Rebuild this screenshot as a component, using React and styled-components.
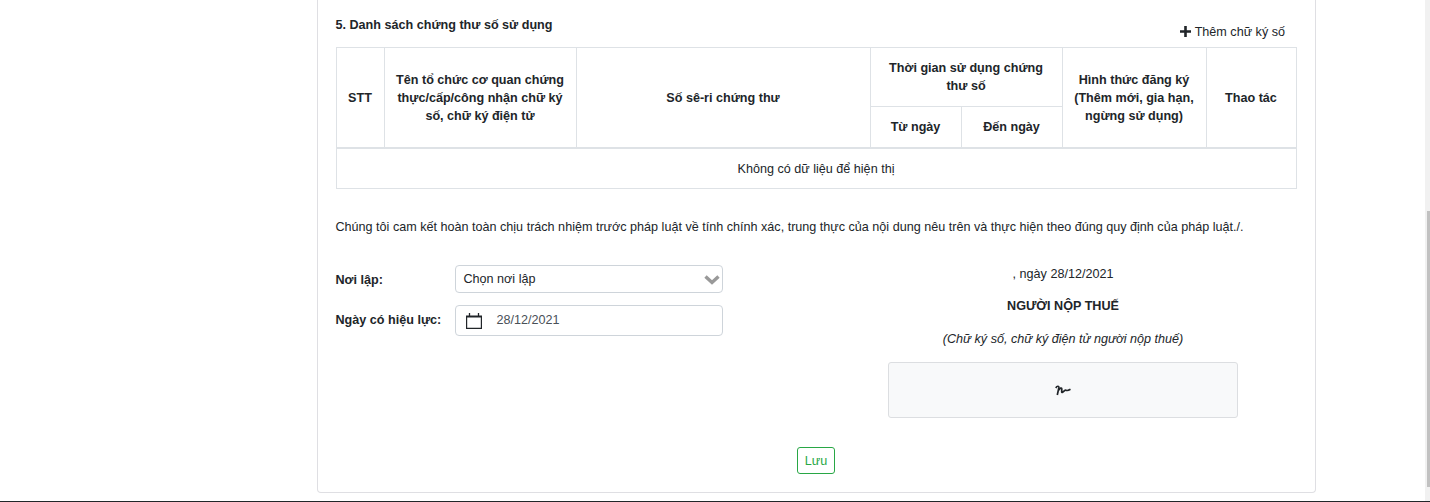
import React from "react";
import styled, { createGlobalStyle } from "styled-components";

const GlobalStyle = createGlobalStyle`
  html, body {
    margin: 0;
    padding: 0;
    background: #fff;
    overflow: hidden;
  }
  body {
    font-family: "Liberation Sans", Arial, sans-serif;
    font-size: 12.6px;
    line-height: 18px;
    color: #212529;
  }
`;

export default function App() {
  return (
    <Page>
      <GlobalStyle />
      <Card>
        <TitleRow>
          <SectionTitle>5. Danh sách chứng thư số sử dụng</SectionTitle>
          <AddButton>
            <svg width="11" height="11" viewBox="0 0 11 11" aria-hidden="true">
              <path d="M4.2 0h2.6v4.2H11v2.6H6.8V11H4.2V6.8H0V4.2h4.2z" fill="#212529" />
            </svg>
            Thêm chữ ký số
          </AddButton>
        </TitleRow>
        <Table>
          <colgroup>
            <col style={{ width: 48 }} />
            <col style={{ width: 192 }} />
            <col style={{ width: 294 }} />
            <col style={{ width: 91 }} />
            <col style={{ width: 101 }} />
            <col style={{ width: 144 }} />
            <col style={{ width: 90 }} />
          </colgroup>
          <thead>
            <tr>
              <Th rowSpan={2}>STT</Th>
              <Th rowSpan={2}>Tên tổ chức cơ quan chứng thực/cấp/công nhận chữ ký số, chữ ký điện tử</Th>
              <Th rowSpan={2}>Số sê-ri chứng thư</Th>
              <Th colSpan={2}>Thời gian sử dụng chứng thư số</Th>
              <Th rowSpan={2}>Hình thức đăng ký (Thêm mới, gia hạn, ngừng sử dụng)</Th>
              <Th rowSpan={2}>Thao tác</Th>
            </tr>
            <tr>
              <Th>Từ ngày</Th>
              <Th>Đến ngày</Th>
            </tr>
          </thead>
          <tbody>
            <tr>
              <Td colSpan={7}>Không có dữ liệu để hiện thị</Td>
            </tr>
          </tbody>
        </Table>
        <Commitment>
          Chúng tôi cam kết hoàn toàn chịu trách nhiệm trước pháp luật về tính chính xác, trung thực của nội dung nêu trên và thực hiện theo đúng quy định của pháp luật./.
        </Commitment>
        <FormRow>
          <Fields>
            <Field>
              <Label $nudge={1}>Nơi lập:</Label>
              <Select>
                Chọn nơi lập
                <svg width="18" height="11" viewBox="0 0 18 11" aria-hidden="true">
                  <path d="M2.5 2.5L9 8.5l6.5-6" fill="none" stroke="#999" strokeWidth="3.4" />
                </svg>
              </Select>
            </Field>
            <Field>
              <Label $nudge={-1}>Ngày có hiệu lực:</Label>
              <DateInput>
                <svg width="16" height="16" viewBox="0 0 16 16" aria-hidden="true">
                  <path d="M.6 3.5h14.800v11.900H.6z" fill="none" stroke="#212529" strokeWidth="1.2" />
                  <path d="M0 3.500h16" fill="none" stroke="#212529" strokeWidth="2" />
                  <path d="M3.500 0v3M12.500 0v3" fill="none" stroke="#212529" strokeWidth="1.300" />
                </svg>
                28/12/2021
              </DateInput>
            </Field>
          </Fields>
          <SignColumn>
            <SignDate>, ngày 28/12/2021</SignDate>
            <Signer>NGƯỜI NỘP THUẾ</Signer>
            <SignHint>(Chữ ký số, chữ ký điện tử người nộp thuế)</SignHint>
            <SignBox>
              <svg width="16" height="11" viewBox="0 0 16 11" aria-hidden="true">
                <path d="M.8 3C2 .8 4.2.6 3.8 3L2.3 10M3.6 5.2C5 3 6.8 2.2 6.8 4.2S6.2 8 7.6 7.2 10 4.6 11 5.2s2 .6 4.5-.9" fill="none" stroke="#212529" strokeWidth="1.7" />
              </svg>
            </SignBox>
          </SignColumn>
        </FormRow>
        <Actions>
          <SaveButton>Lưu</SaveButton>
        </Actions>
      </Card>
      <ScrollTrack>
        <ScrollThumb />
      </ScrollTrack>
      <BottomLine />
    </Page>
  );
}

const Page = styled.div`
  position: relative;
  height: 502px;
  overflow: hidden;
  padding-left: 316.5px;
  box-sizing: border-box;
`;
const Card = styled.section`
  box-sizing: border-box;
  width: 999px;
  height: 493px;
  padding: 0 18px;
  border: 1px solid #dfdfe3;
  border-top: 0;
  border-radius: 0 0 4px 4px;
`;
const TitleRow = styled.div`
  display: flex;
  justify-content: space-between;
  align-items: flex-start;
  height: 47px;
  padding-top: 16px;
  box-sizing: border-box;
`;
const SectionTitle = styled.h5`
  margin: 0;
  font-size: 12.6px;
  line-height: 18px;
  font-weight: 700;
`;
const AddButton = styled.div`
  display: flex;
  align-items: center;
  gap: 4px;
  margin: 7px 11.5px 0 0;
  svg { margin-top: -1px; }
`;
const Table = styled.table`
  width: 961px;
  table-layout: fixed;
  border-collapse: collapse;
`;
const Th = styled.th`
  padding: 11px 8px;
  border: 1px solid #dee2e6;
  font-size: 12.6px;
  line-height: 18px;
  font-weight: 700;
  text-align: center;
  vertical-align: middle;
  thead tr:last-child &,
  &[rowspan] {
    border-bottom: 2px solid #dee2e6;
  }
`;
const Td = styled.td`
  height: 39px;
  padding: 0;
  border: 1px solid #dee2e6;
  text-align: center;
`;
const Commitment = styled.p`
  margin: 29px 0 0;
`;
const FormRow = styled.div`
  display: flex;
  margin-top: 20px;
`;
const Fields = styled.div`
  display: flex;
  flex-direction: column;
  gap: 12px;
  width: 387px;
  padding-top: 9px;
`;
const Field = styled.div`
  display: flex;
  align-items: center;
`;
const Label = styled.label`
  width: 119px;
  font-weight: 700;
  transform: translateY(${(p) => p.$nudge}px);
`;
const Select = styled.div`
  display: flex;
  align-items: center;
  justify-content: space-between;
  box-sizing: border-box;
  width: 268px;
  height: 28px;
  padding: 0 0 0 8px;
  border: 1px solid #ced4da;
  border-radius: 4px;
  svg { margin-right: 1px; }
`;
const DateInput = styled.div`
  display: flex;
  align-items: center;
  gap: 15px;
  box-sizing: border-box;
  width: 268px;
  height: 31px;
  padding: 0 0 2px 10px;
  border: 1px solid #ced4da;
  border-radius: 4px;
  color: #495057;
  svg { margin-top: 2px; }
`;
const SignColumn = styled.div`
  display: flex;
  flex-direction: column;
  align-items: center;
  width: 350px;
  margin-left: 165.5px;
  padding-top: 9px;
`;
const SignDate = styled.div``;
const Signer = styled.div`
  margin-top: 14px;
  font-weight: 700;
`;
const SignHint = styled.div`
  margin-top: 15px;
  font-style: italic;
`;
const SignBox = styled.div`
  display: flex;
  align-items: center;
  justify-content: center;
  box-sizing: border-box;
  width: 350px;
  height: 56px;
  margin-top: 14px;
  background: #f8f9fa;
  border: 1px solid #dcdee1;
  border-radius: 3px;
`;
const Actions = styled.div`
  display: flex;
  justify-content: center;
  margin-top: 29px;
`;
const SaveButton = styled.button`
  box-sizing: border-box;
  width: 38px;
  height: 27px;
  padding: 0;
  background: #fff;
  border: 1px solid #28a745;
  border-radius: 3px;
  color: #28a745;
  font: 12.6px/18px "Liberation Sans", Arial, sans-serif;
`;
const ScrollTrack = styled.div`
  position: absolute;
  top: 0;
  right: 0;
  bottom: 0;
  width: 5px;
  background: #f1f1f1;
`;
const ScrollThumb = styled.div`
  position: absolute;
  top: 211px;
  right: 0;
  width: 3px;
  height: 276px;
  background: #c1c1c1;
`;
const BottomLine = styled.div`
  position: absolute;
  left: 0;
  right: 0;
  bottom: 0;
  height: 1px;
  background: #212529;
`;
